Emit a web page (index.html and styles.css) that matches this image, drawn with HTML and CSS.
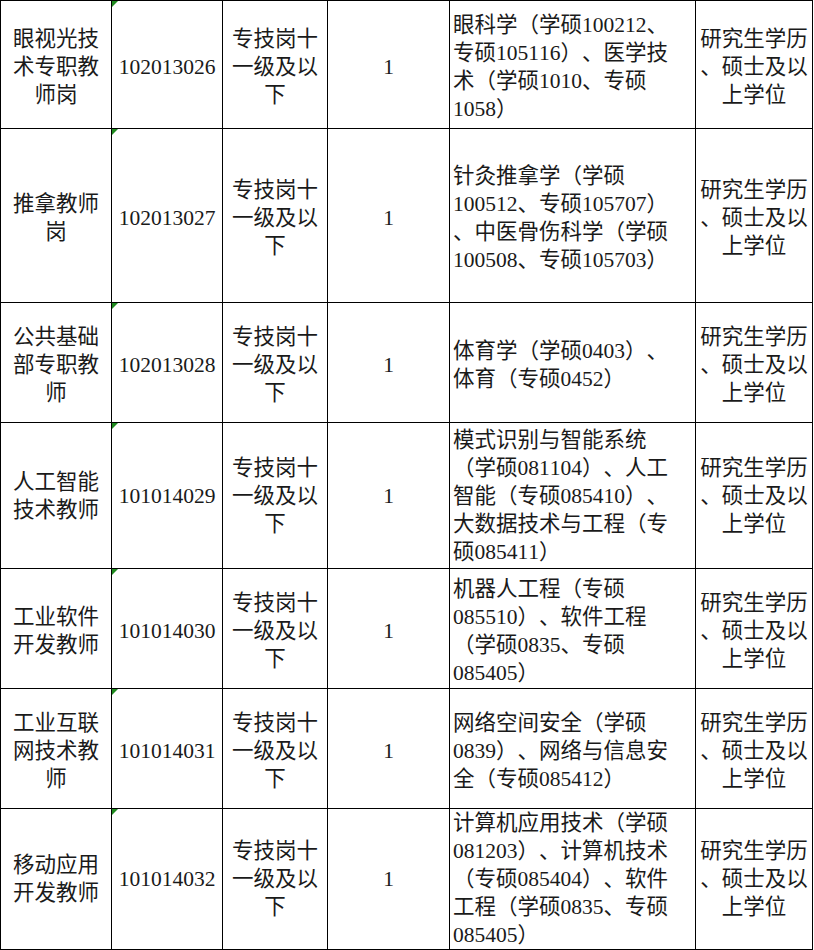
FILE: index.html
```html
<!DOCTYPE html>
<html lang="zh-CN">
<head>
<meta charset="utf-8">
<title>岗位表</title>
<link rel="stylesheet" href="styles.css">
</head>
<body>
<table class="jobs">
  <colgroup>
    <col class="c-name">
    <col class="c-code">
    <col class="c-level">
    <col class="c-num">
    <col class="c-major">
    <col class="c-edu">
  </colgroup>
  <tbody>
    <tr class="h128">
      <td class="center">眼视光技<br>术专职教<br>师岗</td>
      <td class="code">102013026</td>
      <td class="center">专技岗十<br>一级及以<br>下</td>
      <td class="center">1</td>
      <td class="left">眼科学（学硕100212、<br>专硕105116）、医学技<br>术（学硕1010、专硕<br>1058）</td>
      <td class="center">研究生学历<br>、硕士及以<br>上学位</td>
    </tr>
    <tr class="h174">
      <td class="center">推拿教师<br>岗</td>
      <td class="code">102013027</td>
      <td class="center">专技岗十<br>一级及以<br>下</td>
      <td class="center">1</td>
      <td class="left">针灸推拿学（学硕<br>100512、专硕105707）<br>、中医骨伤科学（学硕<br>100508、专硕105703）</td>
      <td class="center">研究生学历<br>、硕士及以<br>上学位</td>
    </tr>
    <tr class="h120">
      <td class="center">公共基础<br>部专职教<br>师</td>
      <td class="code">102013028</td>
      <td class="center">专技岗十<br>一级及以<br>下</td>
      <td class="center">1</td>
      <td class="left">体育学（学硕0403）、<br>体育（专硕0452）</td>
      <td class="center">研究生学历<br>、硕士及以<br>上学位</td>
    </tr>
    <tr class="h146">
      <td class="center">人工智能<br>技术教师</td>
      <td class="code">101014029</td>
      <td class="center">专技岗十<br>一级及以<br>下</td>
      <td class="center">1</td>
      <td class="left">模式识别与智能系统<br>（学硕081104）、人工<br>智能（专硕085410）、<br>大数据技术与工程（专<br>硕085411）</td>
      <td class="center">研究生学历<br>、硕士及以<br>上学位</td>
    </tr>
    <tr class="h120">
      <td class="center">工业软件<br>开发教师</td>
      <td class="code">101014030</td>
      <td class="center">专技岗十<br>一级及以<br>下</td>
      <td class="center">1</td>
      <td class="left">机器人工程（专硕<br>085510）、软件工程<br>（学硕0835、专硕<br>085405）</td>
      <td class="center">研究生学历<br>、硕士及以<br>上学位</td>
    </tr>
    <tr class="h120">
      <td class="center">工业互联<br>网技术教<br>师</td>
      <td class="code">101014031</td>
      <td class="center">专技岗十<br>一级及以<br>下</td>
      <td class="center">1</td>
      <td class="left">网络空间安全（学硕<br>0839）、网络与信息安<br>全（专硕085412）</td>
      <td class="center">研究生学历<br>、硕士及以<br>上学位</td>
    </tr>
    <tr class="h140">
      <td class="center">移动应用<br>开发教师</td>
      <td class="code">101014032</td>
      <td class="center">专技岗十<br>一级及以<br>下</td>
      <td class="center">1</td>
      <td class="left">计算机应用技术（学硕<br>081203）、计算机技术<br>（专硕085404）、软件<br>工程（学硕0835、专硕<br>085405）</td>
      <td class="center">研究生学历<br>、硕士及以<br>上学位</td>
    </tr>
  </tbody>
</table>
</body>
</html>
```

FILE: styles.css
```css
html, body {
  margin: 0;
  padding: 0;
  background: #ffffff;
}

.jobs {
  border-collapse: collapse;
  table-layout: fixed;
  width: 813px;
  font-family: "Liberation Serif", "Noto Sans CJK SC", serif;
  font-size: 21.5px;
  line-height: 28px;
  color: #1a1a1a;
  text-spacing-trim: space-all;
  font-kerning: none;
}

.c-name { width: 111px; }
.c-code { width: 111px; }
.c-level { width: 105px; }
.c-num { width: 122px; }
.c-major { width: 246px; }
.c-edu { width: 117px; }

.jobs td {
  border: 1px solid #000000;
  padding: 4px 3px 0 3px;
  vertical-align: middle;
  white-space: nowrap;
  overflow: hidden;
}

.h128 { height: 128px; }
.h174 { height: 174px; }
.h120 { height: 120px; }
.h146 { height: 146px; }
.h140 { height: 140px; }

.h140 td,
.h146 td {
  padding-top: 0;
}

.center { text-align: center; }
.left { text-align: left; }

.code {
  position: relative;
  text-align: center;
}

.jobs td.code {
  padding-left: 2px;
  padding-right: 2px;
}

.code::before {
  content: "";
  position: absolute;
  top: 0;
  left: 0;
  width: 0;
  height: 0;
  border-top: 6px solid #1f8a1f;
  border-right: 6px solid transparent;
}
```
